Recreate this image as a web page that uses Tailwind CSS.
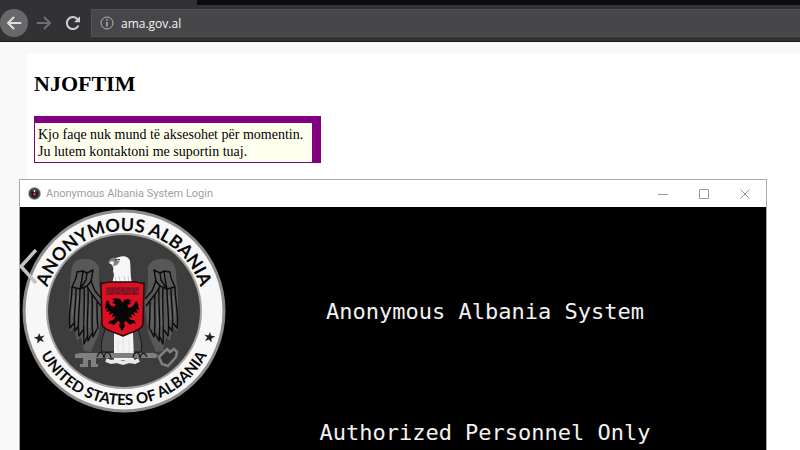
<!DOCTYPE html>
<html lang="sq">
<head>
<meta charset="utf-8">
<title>ama.gov.al</title>
<script src="https://cdn.jsdelivr.net/npm/@tailwindcss/browser@4"></script>
</head>
<body class="relative flex min-h-screen flex-col overflow-hidden bg-[#f9f9f9]">
<header class="bg-[#323234] border-b border-[#18181a]">
  <div class="flex h-[5px]"><div class="w-[197px]"></div><div class="grow bg-[#0c0c0e]"></div></div>
  <nav class="flex items-center pb-1 pt-1" aria-label="Browser">
    <button aria-label="Back" class="flex size-7 items-center justify-center rounded-full bg-[#68686a]">
      <svg class="size-4" viewBox="0 0 16 16" fill="none" stroke="#dededf" stroke-width="2" stroke-linecap="round" stroke-linejoin="round"><path d="M14.500 8H2M7.500 2.500 2 8l5.500 5.500"/></svg>
    </button>
    <button aria-label="Forward" class="ml-2 flex size-4 items-center justify-center">
      <svg class="size-4" viewBox="0 0 16 16" fill="none" stroke="#6f6f71" stroke-width="2" stroke-linecap="round" stroke-linejoin="round"><path d="M1.500 8H14M8.500 2.500 14 8l-5.500 5.500"/></svg>
    </button>
    <button aria-label="Reload" class="ml-[13px] mr-[10px] flex size-4 items-center justify-center">
      <svg class="size-4" viewBox="0 0 16 16" fill="none" stroke="#cfcfd1" stroke-width="2" stroke-linecap="round"><path d="M13 11.200A6 6 0 1 1 12.300 4"/><path d="M15 1.200v6.100H9z" fill="#cfcfd1" stroke="none"/></svg>
    </button>
    <div class="flex h-7 grow items-center border-y border-l border-[#525254] bg-[#474749] pl-2">
      <svg class="size-[14px]" viewBox="0 0 14 14" fill="none" stroke="#b4b4b6"><circle cx="7" cy="7" r="6"/><path d="M7 6v4.500" stroke-width="1.500"/><path d="M7 3.300v1.500" stroke-width="1.500"/></svg>
      <input aria-label="Address" value="ama.gov.al" class="ml-[7px] mt-[2px] min-w-0 grow bg-transparent font-['Open_Sans',sans-serif] text-[12px] text-[#f4f4f6] outline-none">
    </div>
  </nav>
</header>
<main class="ml-[27px] mt-3 grow bg-white px-[7px] pt-4 font-['Liberation_Serif',serif] text-black">
  <h1 class="text-[22px] font-bold leading-7">NJOFTIM</h1>
  <p class="mt-[18px] w-[287px] border border-r-[9px] border-t-[7px] border-[#800080] bg-[#ffffee] px-[3px] pb-[2px] pt-[3px] text-[14px] leading-[17px]">Kjo faqe nuk mund të aksesohet për momentin.<br>Ju lutem kontaktoni me suportin tuaj.</p>
</main>
<section class="absolute bottom-0 left-[19px] right-[33px] top-[179px] flex flex-col border border-b-0 border-[#a9a9a9] bg-black" aria-label="Anonymous Albania System Login">
  <div class="flex h-[27px] shrink-0 items-center bg-white pl-2">
    <svg class="size-[13px]" viewBox="0 0 13 13"><circle cx="6.500" cy="6.500" r="6.500" fill="#aaa"/><circle cx="6.500" cy="6.500" r="5.600" fill="#464446"/><path d="M3 4l2 1 1.500-2L8 5l2-1-.5 5-3 2-3-2z" fill="#171517"/><path d="M5.200 5.500h2.600v2.800l-1.300 1-1.300-1z" fill="#b43a45"/><path d="M5.900 3h1.200v2H5.900z" fill="#eee"/></svg>
    <h2 class="ml-[5px] grow font-['Roboto',sans-serif] text-[11px] leading-4 text-[#a0a0a0]">Anonymous Albania System Login</h2>
    <div class="flex gap-[31px] pr-4">
      <button aria-label="Minimize"><svg class="size-[10px]" viewBox="0 0 10 10" stroke="#999"><path d="M0 5.500h10"/></svg></button>
      <button aria-label="Maximize"><svg class="size-[10px]" viewBox="0 0 10 10" fill="none" stroke="#999"><path d="M.5.500h9v9h-9z"/></svg></button>
      <button aria-label="Close"><svg class="size-[10px]" viewBox="0 0 10 10" stroke="#999"><path d="M.5.500l9 9m0-9-9 9"/></svg></button>
    </div>
  </div>
  <div class="flex min-h-0 grow items-start">
    <svg class="size-[208px] shrink-0 overflow-visible" viewBox="20 207 208 208" role="img" aria-label="Anonymous Albania seal">
      <defs>
        <path id="upper" d="M44 311a80 80 0 0 1 160 0"/>
        <path id="lower" d="M30 311a94 94 0 0 0 188 0"/>
      </defs>
      <circle cx="124" cy="311" r="101.500" fill="#8c8c8c"/>
      <circle cx="124" cy="311" r="98.500" fill="#f7f7f7"/>
      <circle cx="124" cy="311" r="78" fill="#a2a2a2"/>
      <circle cx="124" cy="311" r="76" fill="#3d3d3d"/>
      <g font-family="Lato, sans-serif" fill="#050505" text-anchor="middle">
        <text font-size="18" font-weight="700"><textPath href="#upper" startOffset="50%">ANONYMOUS ALBANIA</textPath></text>
        <text font-size="15" font-weight="700"><textPath href="#lower" startOffset="50%">UNITED STATES OF ALBANIA</textPath></text>
      </g>
      <g fill="#222">
        <path d="M39 333l1.600 3.600 4-1-2.800 3 2.200 3.600-3.800-1.600-3 3 .4-4.200-3.800-2 4.200-.8z"/>
        <path d="M210 332l-1.600 3.600-4-1 2.800 3-2.200 3.600 3.800-1.600 3 3-.4-4.200 3.800-2-4.200-.8z"/>
      </g>
      <!-- wings -->
      <g id="wing">
        <path d="M103 300C98 292 99 280 99 268 97 259 86 257 78 260 70 263 71 275 70 287 68 300 69 318 70 332L74 327 77 341 81 337 84 351 91 352 99 333z" fill="#585858"/>
        <g fill="none" stroke="#0b0b0b" stroke-width="1.400" stroke-linejoin="round">
          <path d="M102 299l-7-8-4-10 2-11-6 3-4-2-6 1-1 6-4 9 8 2 7-3 4 7 10 13M83 271l-1 8-2 10M87 273l-1 7-6 9M92 280l-5 6"/>
          <path d="M72 287c0 14-4 26-2 41l4-5M76 289c0 14-3 28-1 42l4-6M80 289c0 17-3 32-1 47l4-6M84 288c1 18-1 36 0 56l4-9M88 288c1 18-2 34 0 53l4-8M92 295c1 16-1 28 1 42l4-8M97 302c0 10 0 18 1 27"/>
        </g>
        <path d="M74 296l-2 20M78 296l-2 24M86 298l-1 28M90 304l-1 24M95 306v18" stroke="#707070" stroke-width=".8"/>
      </g>
      <use href="#wing" transform="matrix(-1 0 0 1 247 0)"/>
      <!-- thighs and tail -->
      <path d="M106 327c-3 9-6 16-4 25h39c2-9-1-16-4-25z" fill="#4c4c4c" stroke="#191919"/>
      <path d="M114 333h19l1 27H114z" fill="#f3f3f3"/>
      <path d="M118 339v18m5-19v20m6-19v18" stroke="#ddd" stroke-width=".7"/>
      <!-- key -->
      <path d="M75 354l5-1h74l4 2-2 3H96v6h2v3h-7v-7h-3v7h-8v-3h3v-6h-8z" fill="#808080"/>
      <path d="M159 357l8-8 3 3 4-3 3 3-1 5-8 9-6-2z" fill="#333" stroke="#808080" stroke-width="2.500"/>
      <path d="M106 360l5 2 6-1 6 2 6-2 6 1 4-2" fill="none" stroke="#e8e8e8" stroke-width="4"/>
      <path d="M97 357c2-7 6-5 7 1 1-8 6-7 7 0m22 0c1-7 6-8 7 0 1-6 5-6 7-1" fill="#777" stroke="#171717" stroke-width="1.200"/>
      <!-- head -->
      <path d="M112 284l2-9-1-4c1-3 0-5-2-7-2 0-2-2-1-3 3-3 6-3 9-4 5-2 10 0 11 4 1 8 0 14 2 22l-3-2-2 3-2-3-2 3-2-3-3 3-2-3z" fill="#f6f6f6"/>
      <path d="M116 258c-4-1-7 1-8 5l4-2 2 1-1 4 4-1 3-4-3 0z" fill="#808080"/>
      <path d="M115 260l5-.5" fill="none" stroke="#222" stroke-width="1.200"/>
      <path d="M115 277l1 4m3-5 1 5m4-5 1 5m3-5 1 5" stroke="#bbb" stroke-width=".7"/>
      <!-- shield -->
      <path d="M101 283q4 1 7-1h29q3 2 7 1l-1 40c0 7-12 9-20 13-9-4-21-6-21-13z" fill="#dc1020" stroke="#26080b" stroke-width="1.500"/>
      <path d="M106 287h33v8h-33z" fill="#971522"/>
      <path d="M107 289h3m2-1v5m3-4h5m3-2v5m3-3h5m3-1v6m2-5h2M108 294h5m3-1h4m4 1h5m4 0h4" stroke="#6a121c" stroke-width="1.200"/>
      <path d="M123 303l-3-4-5-1-3 2 3 1-3 2 4 1-2 3-4-2-2-5-2 2-1 7 3-1-2 4 4-1-1 4 4-2-1 4 4-1-3 4-3 1-2 2 4 1 2 1 4-4 2 1-1 4 3 5 3-5-1-4 2-1 4 4 3-2 3 1-2-4-3 0-3-3 4 1-1-4 4 2-1-4 4 1-2-4 3 1-1-7-2-2-3 5-4 2-2-3 4-1-2-2 3-1-4-2-4 1z" fill="#080606"/>
      <path d="M36 250l-15 16.500L36 283" fill="none" stroke="#c2c2c2" stroke-width="3.500"/>
    </svg>
    <div class="flex grow flex-col gap-[93px] pr-6 pt-[91px] text-center font-['DejaVu_Sans_Mono',monospace] text-[22px] leading-7 text-[#f2f2f2]">
      <p>Anonymous Albania System</p>
      <p>Authorized Personnel Only</p>
    </div>
  </div>
</section>
</body>
</html>
